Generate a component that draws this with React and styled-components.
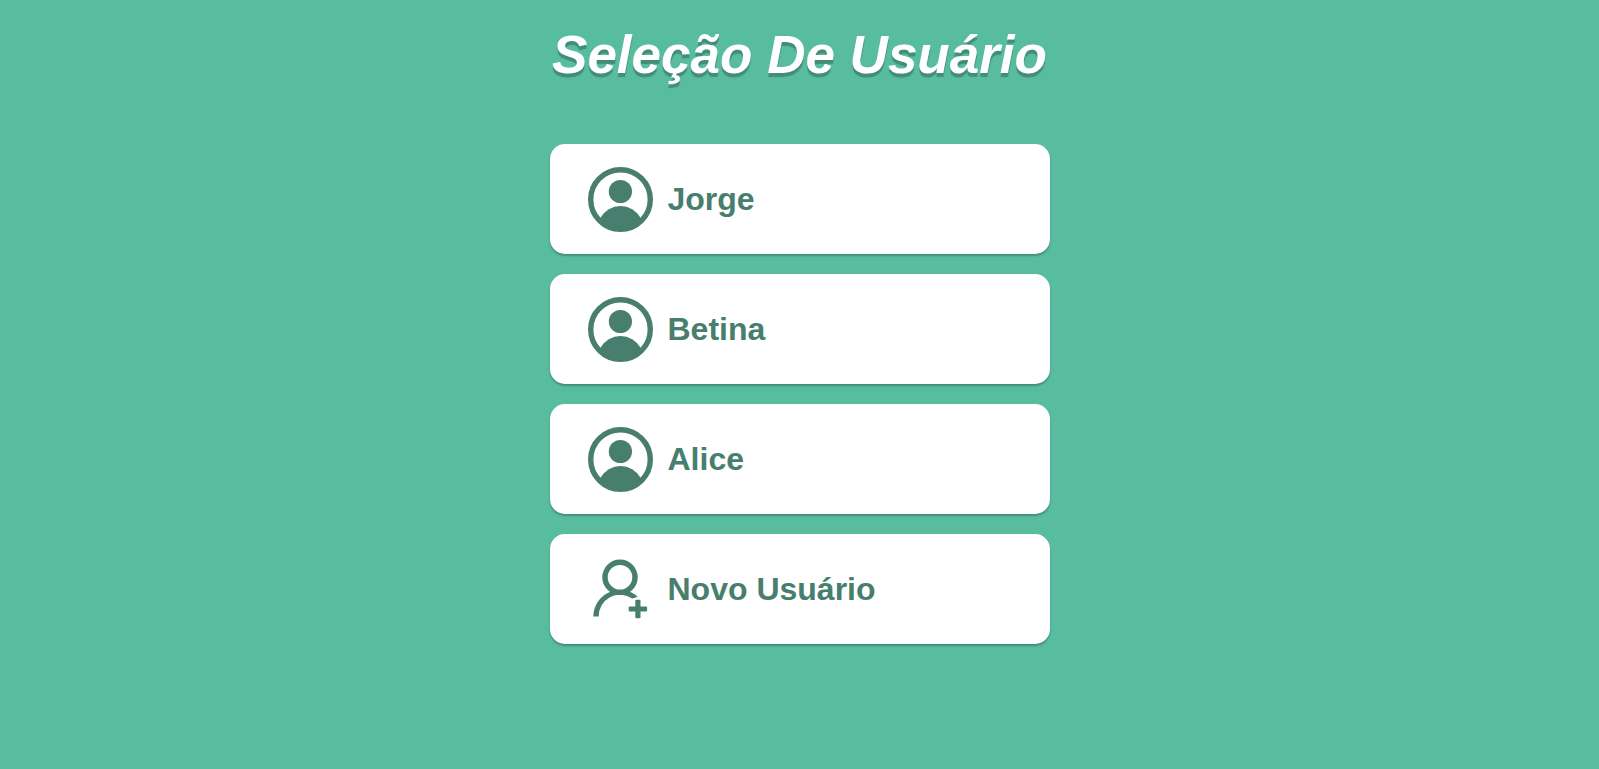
import React from "react";
import styled, { createGlobalStyle } from "styled-components";

const GlobalStyle = createGlobalStyle`
  * { box-sizing: border-box; }
  body {
    margin: 0;
    min-height: 100vh;
    background: #58bc9f;
    font-family: "Liberation Sans", Arial, sans-serif;
  }
`;

const Page = styled.main`
  display: flex;
  flex-direction: column;
  align-items: center;
  gap: 58px;
  padding: 24px 20px;
`;

const Title = styled.h1`
  margin: 0;
  color: #fff;
  font-size: 53px;
  line-height: 62px;
  font-style: italic;
  font-weight: bold;
  text-align: center;
  text-shadow: 0 4px 1px rgba(0, 0, 0, 0.25);
`;

const UserList = styled.ul`
  display: flex;
  flex-direction: column;
  gap: 20px;
  width: 100%;
  max-width: 500px;
  margin: 0;
  padding: 0;
  list-style: none;
`;

const UserButton = styled.button`
  display: flex;
  align-items: center;
  gap: 15px;
  width: 100%;
  min-height: 110px;
  padding: 0 38px;
  border: 0;
  border-radius: 15px;
  background: #fff;
  box-shadow: 0 2px 2px rgba(0, 0, 0, 0.25);
  color: #477e6d;
  font: bold 32px/40px "Liberation Sans", Arial, sans-serif;
  text-align: left;
  cursor: pointer;
`;

const Icon = styled.svg`
  flex: none;
  width: 65px;
  height: 65px;
`;

const UserIcon = () => (
  <Icon viewBox="0 0 65 65" fill="currentColor" aria-hidden="true">
    <circle cx="32.5" cy="32.5" r="29.8" fill="none" stroke="currentColor" strokeWidth="5.4" />
    <circle cx="32.4" cy="24.5" r="11.6" />
    <path d="M12.4 50.8A23 23 0 0 1 52.6 50.8L52 55A29.8 29.8 0 0 1 13 55Z" />
  </Icon>
);

const AddUserIcon = () => (
  <Icon viewBox="0 0 65 65" fill="currentColor" aria-hidden="true">
    <circle cx="32" cy="20.3" r="15" fill="none" stroke="currentColor" strokeWidth="5.4" />
    <path d="M5.3 59.4A26.7 26.7 0 0 1 49.9 39.8L44.2 41.6A21.3 21.3 0 0 0 10.7 59.4Z" />
    <rect x="40.7" y="49.4" width="18.4" height="5.2" rx="1" />
    <rect x="47.3" y="42.8" width="5.2" height="18.4" rx="1" />
  </Icon>
);

const users = ["Jorge", "Betina", "Alice"];

export default function App() {
  return (
    <>
      <GlobalStyle />
      <Page>
        <Title>Seleção De Usuário</Title>
        <UserList>
          {users.map((name) => (
            <li key={name}>
              <UserButton type="button">
                <UserIcon />
                {name}
              </UserButton>
            </li>
          ))}
          <li>
            <UserButton type="button">
              <AddUserIcon />
              Novo Usuário
            </UserButton>
          </li>
        </UserList>
      </Page>
    </>
  );
}
